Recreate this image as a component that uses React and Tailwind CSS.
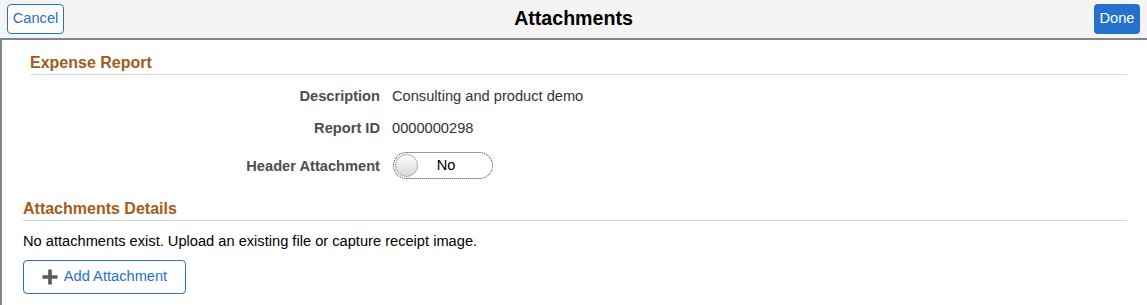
import React, { useState } from 'react';

function Field({ label, children }) {
  return (
    <div className="flex items-center leading-[18px]">
      <div className="w-[362px] shrink-0 text-right pr-[12px] font-bold text-[#4d4d4d]">{label}</div>
      <div className="text-[#333333]">{children}</div>
    </div>
  );
}

function Toggle({ on, onChange }) {
  return (
    <button
      type="button"
      onClick={() => onChange(!on)}
      className="relative flex items-center w-[100px] h-[27px] rounded-full border border-dotted border-[#333] bg-white outline-none"
    >
      <span className="absolute left-[1px] top-[1px] w-[23px] h-[23px] rounded-full border border-[#a9a9a9] bg-gradient-to-b from-[#ffffff] to-[#d9d9d9]" />
      <span className="w-full text-center text-[14.65px] text-black pl-[6px]">{on ? 'Yes' : 'No'}</span>
    </button>
  );
}

function SectionTitle({ children }) {
  return (
    <div className="border-b border-[#d3d6db] pb-[2px]">
      <h2 className="text-[16px] font-bold text-[#a35a1c] leading-[19px]">{children}</h2>
    </div>
  );
}

export default function App() {
  const [headerAttach, setHeaderAttach] = useState(false);

  return (
    <div className="w-[1147px] h-[305px] bg-white overflow-hidden text-[14.65px]" style={{ fontFamily: '"Liberation Sans", Arial, sans-serif' }}>
      {/* Header bar */}
      <header className="h-[40px] bg-[#f4f4f4] border-b-2 border-[#80868b] flex items-center justify-between px-[7px] relative">
        <button className="h-[30px] w-[57px] rounded-[4px] border border-[#2a6fc9] bg-white text-[#2a6fc9] text-[14.65px]">Cancel</button>
        <h1 className="absolute left-0 right-0 text-center text-[19.6px] font-bold text-black pointer-events-none">Attachments</h1>
        <button className="h-[30px] w-[46px] rounded-[4px] bg-[#2371cc] text-white text-[14.65px]">Done</button>
      </header>

      <div className="border-l-2 border-[#80868b] h-[265px]">
        <div className="pl-[28px] pr-[20px] pt-[13px]">
          <SectionTitle>Expense Report</SectionTitle>
          <div className="flex flex-col pt-[12px]">
            <Field label="Description">Consulting and product demo</Field>
            <div className="h-[14px]" />
            <Field label="Report ID">0000000298</Field>
            <div className="flex items-center mt-[15px]">
              <div className="w-[363px] shrink-0 text-right pr-[13px] font-bold text-[#4d4d4d] leading-[18px]">Header Attachment</div>
              <Toggle on={headerAttach} onChange={setHeaderAttach} />
            </div>
          </div>
        </div>

        <div className="pl-[21px] pr-[20px] pt-[20px]">
          <SectionTitle>Attachments Details</SectionTitle>
          <p className="pt-[11px] text-black leading-[18px]">No attachments exist. Upload an existing file or capture receipt image.</p>
          <button className="mt-[10px] h-[34px] w-[163px] flex items-center justify-center gap-[6px] rounded-[4px] border border-[#2a6fc9] bg-white text-[#2a6fc9] text-[14.65px]">
            <svg width="16" height="16" viewBox="0 0 16 16" className="shrink-0">
              <path d="M6.2 0.5h3.6v5.7h5.7v3.6H9.8v5.7H6.2V9.8H0.5V6.2h5.7z" fill="#5a5a5a" />
            </svg>
            <span>Add Attachment</span>
          </button>
        </div>
      </div>
    </div>
  );
}
